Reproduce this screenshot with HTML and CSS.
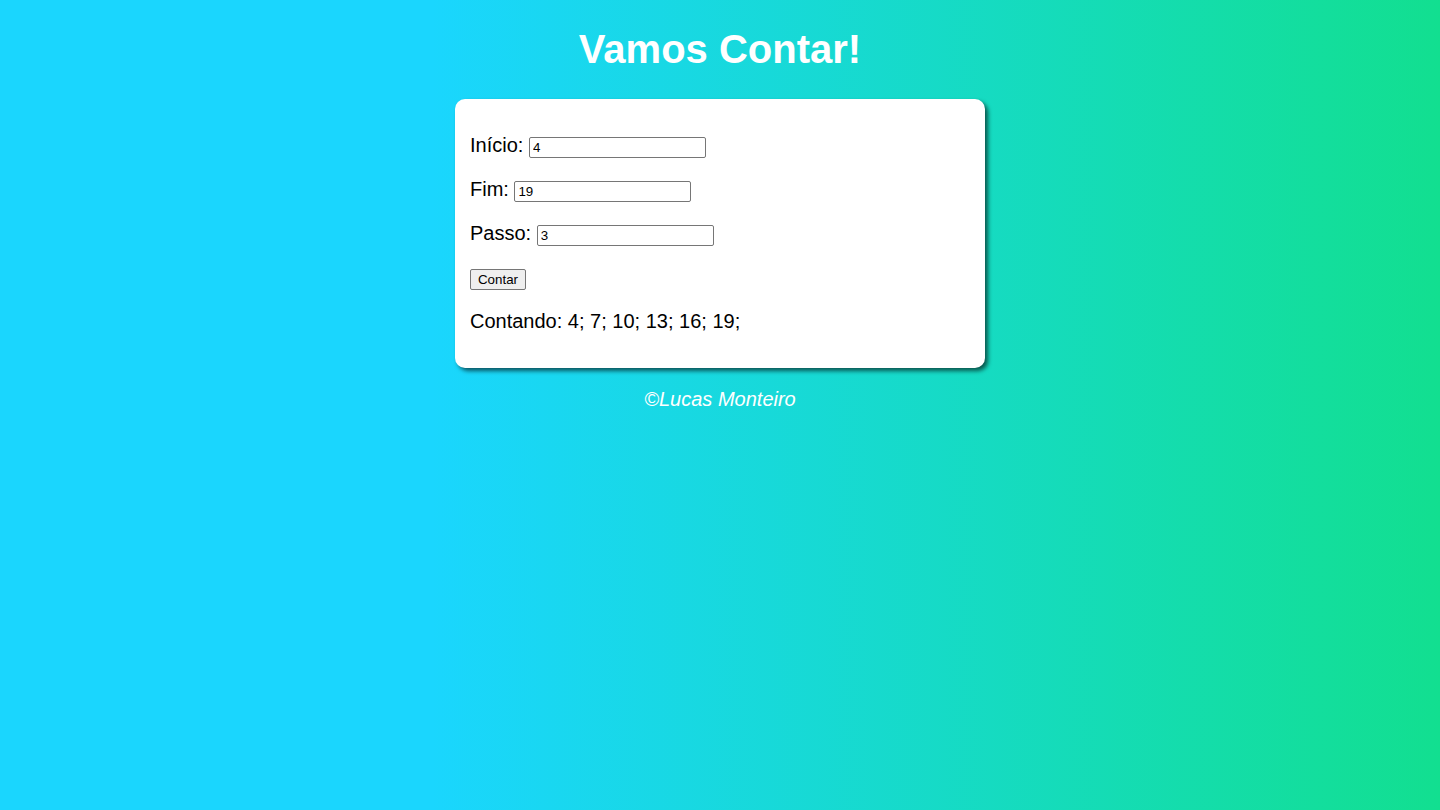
FILE: index.html
```html
<!DOCTYPE html>
<html lang="pt-br">
<head>
<meta charset="UTF-8">
<title>Vamos Contar!</title>
<link rel="stylesheet" href="styles.css">
</head>
<body>
<header class="topo">
  <h1 class="titulo">Vamos Contar!</h1>
</header>
<section class="cartao">
  <div class="campos">
    <p class="linha">Início: <input class="campo" type="number" value="4"></p>
    <p class="linha">Fim: <input class="campo" type="number" value="19"></p>
    <p class="linha">Passo: <input class="campo" type="number" value="3"></p>
    <p class="linha"><input class="botao" type="button" value="Contar"></p>
  </div>
  <div class="resultado">
    <p class="linha">Contando: 4; 7; 10; 13; 16; 19;</p>
  </div>
</section>
<footer class="rodape">
  <p class="assinatura">&copy;Lucas Monteiro</p>
</footer>
</body>
</html>
```
FILE: styles.css
```css
html, body {
  height: 100%;
}
body {
  margin: 0;
  font-family: "Liberation Sans", Arial, sans-serif;
  font-size: 20px;
  background: linear-gradient(to right, rgb(26, 214, 254) 30%, rgb(18, 223, 144));
  background-attachment: fixed;
}
.topo {
  display: flex;
  justify-content: center;
}
.titulo {
  margin: 26px 0 27px;
  color: #ffffff;
  font-size: 40px;
  font-weight: bold;
  line-height: 46px;
}
.cartao {
  width: 530px;
  box-sizing: border-box;
  margin: 0 auto;
  padding: 15px;
  background: #ffffff;
  border-radius: 10px;
  box-shadow: 3px 3px 4px rgba(0, 0, 0, 0.6);
}
.linha {
  margin: 20px 0;
  color: #000000;
  line-height: 23px;
}
.campo {
  width: 177px;
  height: 21px;
  box-sizing: border-box;
  border: 1px solid #767676;
  border-radius: 2px;
  padding: 1px 3px;
  font-family: "Liberation Sans", Arial, sans-serif;
  font-size: 13.33px;
  vertical-align: 0;
  -moz-appearance: textfield;
}
.campo::-webkit-inner-spin-button,
.campo::-webkit-outer-spin-button {
  -webkit-appearance: none;
  margin: 0;
}
.botao {
  width: 56px;
  height: 21px;
  box-sizing: border-box;
  border: 1px solid #767676;
  border-radius: 2px;
  background: #efefef;
  padding: 1px 6px;
  font-family: "Liberation Sans", Arial, sans-serif;
  font-size: 13.33px;
  color: #000;
}
.rodape {
  display: flex;
  justify-content: center;
}
.assinatura {
  margin: 20px 0;
  color: #ffffff;
  font-style: italic;
  line-height: 23px;
}
```
